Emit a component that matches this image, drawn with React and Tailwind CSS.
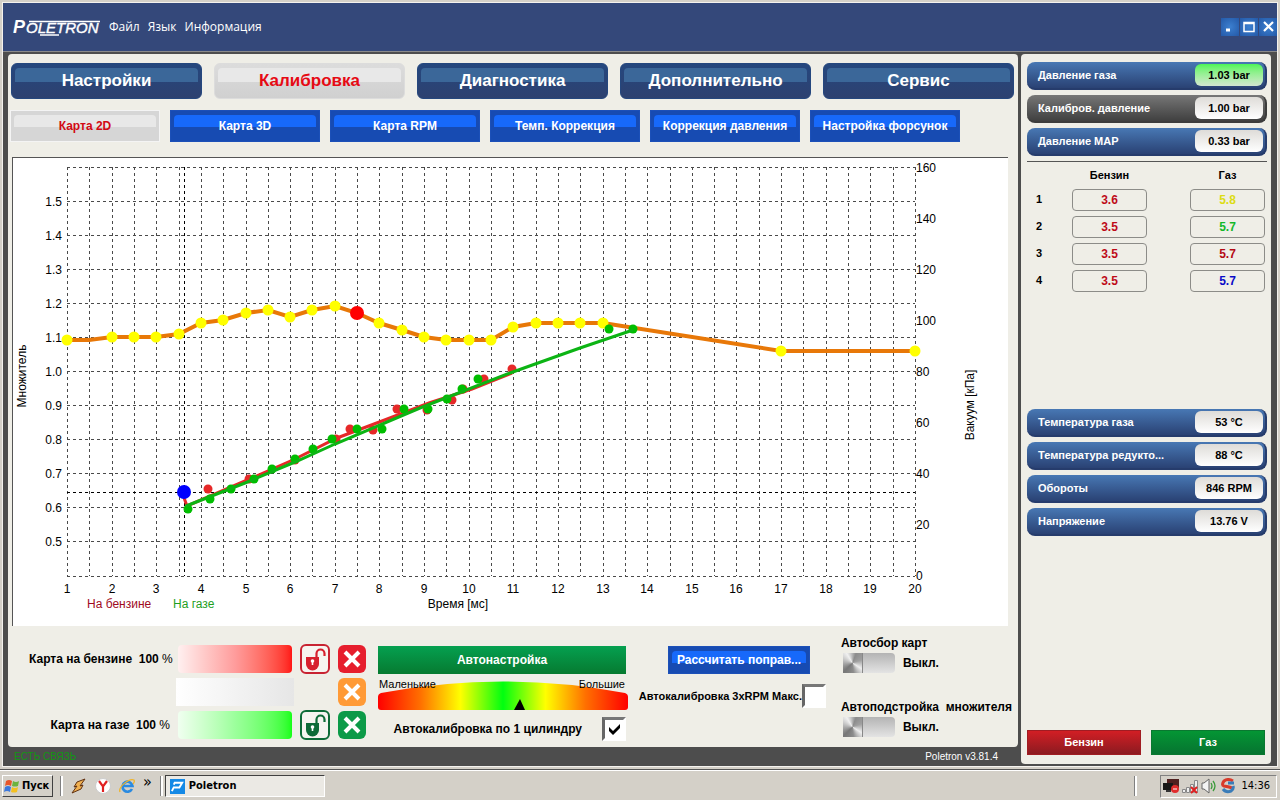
import React, { useState } from 'react';

const MAIN_TABS = ['Настройки', 'Калибровка', 'Диагностика', 'Дополнительно', 'Сервис'];
const MAP_TABS = ['Карта 2D', 'Карта 3D', 'Карта RPM', 'Темп. Коррекция', 'Коррекция давления', 'Настройка форсунок'];

const INJECTORS = [
    { petrol: '3.6', gas: '5.8', gasColor: 'text-[#dcdc14]' },
    { petrol: '3.5', gas: '5.7', gasColor: 'text-[#14b82a]' },
    { petrol: '3.5', gas: '5.7', gasColor: 'text-[#b40a14]' },
    { petrol: '3.5', gas: '5.7', gasColor: 'text-[#0a0ac8]' },
];

// [injection time ms, multiplier]
const MULTIPLIER = [
    [1, 1.09], [2, 1.1], [2.5, 1.1], [3, 1.1], [3.5, 1.11], [4, 1.14], [4.5, 1.15], [5, 1.17], [5.5, 1.18],
    [6, 1.16], [6.5, 1.18], [7, 1.19], [7.5, 1.17], [8, 1.14], [8.5, 1.12], [9, 1.1], [9.5, 1.09], [10, 1.09],
    [10.5, 1.09], [11, 1.13], [11.5, 1.14], [12, 1.14], [12.5, 1.14], [13, 1.14], [17, 1.06], [20, 1.06],
];

// collected points in plot coordinates
const PETROL_POINTS = [
    [196, 332], [237, 322], [283, 303], [324, 282], [338, 272], [361, 273], [385, 252], [415, 253], [440, 243],
    [451, 232], [472, 222], [500, 212],
];
const GAS_POINTS = [
    [176, 352], [198, 342], [219, 332], [242, 322], [260, 312], [283, 302], [301, 292], [320, 282], [345, 272],
    [370, 272], [392, 252], [416, 252], [435, 242], [450, 232], [466, 222], [597, 172], [621, 172],
];

const px = (ms) => Math.round(55 + (ms - 1) * 44.63);
const py = (m) => Math.round(180 - (m - 1.1) * 340);

const MapChart = () => {
    const cols = Array.from({ length: 39 }, (_, i) => px(1 + i / 2));
    const rows = Array.from({ length: 11 }, (_, i) => py(1.5 - i / 10));

    return (
        <svg viewBox="0 0 996 469" className="block w-full bg-white" fontFamily="'Liberation Sans', Arial, sans-serif" fontSize="12">
            <path d="M0 .5H996M.5 0V469" stroke="#555" fill="none" />
            <g stroke="#4a4a4a" strokeDasharray="3 3" shapeRendering="crispEdges">
                {cols.map((x) => <path key={x} d={`M${x}.5 10V419`} />)}
                {[10, ...rows, 419].map((y) => <path key={y} d={`M55 ${y}.5H903`} />)}
                <path d="M172.500 10V419M55 335.500H903" stroke="#000" />
            </g>

            <g textAnchor="end">
                {rows.map((y, i) => <text key={y} x="50" y={y + 5}>{(1.5 - i / 10).toFixed(1)}</text>)}
            </g>
            <g textAnchor="middle">
                {Array.from({ length: 20 }, (_, i) => (
                    <text key={i} x={px(i + 1)} y="436">{i + 1}</text>
                ))}
            </g>
            {Array.from({ length: 9 }, (_, i) => (
                <text key={i} x="904" y={15 + i * 51}>{160 - i * 20}</text>
            ))}
            <text x="75" y="451" fill="#a00a1e">На бензине</text>
            <text x="161" y="451" fill="#1ea01e">На газе</text>
            <text x="446" y="451" textAnchor="middle">Время [мс]</text>
            <text transform="translate(14 219) rotate(-90)" textAnchor="middle">Множитель</text>
            <text transform="translate(962 248) rotate(-90)" textAnchor="middle">Вакуум [кПа]</text>

            <polyline
                points={MULTIPLIER.map(([x, y]) => `${px(x)},${py(y)}`).join(' ').replace(' ', ` ${px(1.5)},183 `)}
                fill="none" stroke="#e87808" strokeWidth="4"
            />
            {MULTIPLIER.map(([x, y]) => (
                <circle key={x} cx={px(x)} cy={py(y)} r={x === 7.5 ? 7 : 5.5} fill={x === 7.5 ? '#ff0000' : '#ffff00'} />
            ))}

            {PETROL_POINTS.map(([x, y]) => <circle key={x} cx={x} cy={y} r="4.500" fill="#e62828" />)}
            <polyline points="171,338 175,349 233,324 283,302 325,281 370,264 417,246 460,232 500,216" fill="none" stroke="#e62828" strokeWidth="3" />
            {GAS_POINTS.map(([x, y]) => <circle key={x} cx={x} cy={y} r="4.500" fill="#00be00" />)}
            <polyline points="174,349 233,326 283,305 323,287 408,251 498,216 568,191 621,173" fill="none" stroke="#0cb414" strokeWidth="3" />
            <circle cx="172" cy="335" r="7" fill="#0000ff" />
        </svg>
    );
};

const Logo = () => (
    <svg viewBox="0 0 88 20" className="h-5 w-[88px]" fill="#fff" fontFamily="'Liberation Sans', Arial, sans-serif" fontStyle="italic">
        <text x="0" y="16" fontSize="18" fontWeight="bold">P</text>
        <text x="13" y="16" fontSize="15" stroke="#fff" strokeWidth=".4">OLETRON</text>
        <path d="M16 4.500H87M27 18H46" stroke="#fff" strokeWidth="1.500" />
    </svg>
);

const TitleBar = () => (
    <header className="flex h-12 items-center bg-[#34487a] pl-[10px] text-white">
        <Logo />
        <nav className="ml-2 flex gap-2 font-['Open_Sans',sans-serif] text-xs">
            {['Файл', 'Язык', 'Информация'].map((item) => <a key={item} href="#">{item}</a>)}
        </nav>
        <div className="ml-auto flex gap-px">
            {['M5 12H9', 'M4 4.500H14V13.500H4ZM4 5.500H14', 'M5 4L14 13M14 4L5 13'].map((d, i) => (
                <button
                    key={d} aria-label={['Свернуть', 'Развернуть', 'Закрыть'][i]}
                    className="size-[18px] bg-radial from-[#3c80d0] to-[#2459a8]"
                >
                    <svg viewBox="0 0 18 18" fill="none" stroke="#fff" strokeWidth={[3, 1.5, 2.2][i]}><path d={d} /></svg>
                </button>
            ))}
        </div>
    </header>
);

const MainTab = ({ label, active, onClick }) => (
    <button
        onClick={onClick}
        className={`relative h-9 rounded-md border text-[17px] font-bold ${active
            ? 'border-[#dcdcdc] bg-linear-to-b from-[#dcdcdc] to-[#d0d0d0] text-[#e60a14]'
            : 'border-[#25477e] bg-linear-to-b from-[#25477e] to-[#2d4170] text-white'}`}
    >
        <span className={`absolute inset-x-[3px] top-1 h-[14px] rounded-t-sm ${active ? 'bg-[#e8e8e8]' : 'bg-[#3b6799]'}`} />
        <span className="relative">{label}</span>
    </button>
);

const BlueButton = ({ label, active, onClick, className }) => (
    <button
        onClick={onClick}
        className={`relative border text-xs font-bold ${className} ${active
            ? 'border-[#f4f4f4] bg-[#d6d6d6] text-[#d20a14]'
            : 'border-[#1c50b8] bg-[#174bb2] text-white'}`}
    >
        <span className={`absolute inset-x-[3px] top-1 h-3 rounded-t-sm ${active ? 'bg-[#e8e8e8]' : 'bg-[#1769fa]'}`} />
        <span className="relative">{label}</span>
    </button>
);

const Lock = ({ className, label }) => (
    <button aria-label={label} className={`flex size-[30px] items-center justify-center rounded-md border-2 bg-[#f6f4f0] ${className}`}>
        <svg viewBox="0 0 26 26" className="size-[26px]">
            <path d="M4 11H17V18A6.500 6.500 0 0 1 4 18Z" fill="currentColor" />
            <path d="M14.500 11V7.500A4 4 0 0 1 22.500 7.500V10" fill="none" stroke="currentColor" strokeWidth="2.200" />
            <circle cx="10.500" cy="15" r="1.800" fill="#fff" />
            <path d="M9.700 15H11.300V19H9.700Z" fill="#fff" />
        </svg>
    </button>
);

const ClearButton = ({ className }) => (
    <button aria-label="Очистить" className={`size-7 rounded-md ${className}`}>
        <svg viewBox="0 0 28 28"><path d="M7 7L21 21M21 7L7 21" stroke="#fff" strokeWidth="4" /></svg>
    </button>
);

const CheckBox = ({ id, defaultChecked }) => (
    <span className="relative size-6 shrink-0">
        <input
            id={id} type="checkbox" defaultChecked={defaultChecked}
            className="peer block size-6 appearance-none border-[3px] border-t-[#777] border-r-white border-b-white border-l-[#666] bg-white"
        />
        <svg viewBox="0 0 24 24" className="pointer-events-none absolute inset-0 hidden peer-checked:block">
            <path d="M7 10L11 14L18 7V11L11 18L7 14Z" fill="#000" />
        </svg>
    </span>
);

const Toggle = ({ id, label }) => {
    const [on, setOn] = useState(false);
    return (
        <div>
            <label htmlFor={id} className="block whitespace-pre leading-4">{label}</label>
            <div className="mt-[2px] ml-[2px] flex items-center gap-2 leading-5">
                <input
                    id={id} type="checkbox" role="switch" checked={on} onChange={() => setOn(!on)}
                    className="h-5 w-[52px] appearance-none rounded-sm bg-linear-to-b from-[#b4b4b4] to-[#e4e4e4] before:block before:size-5 before:border-r before:border-[#888] before:bg-[conic-gradient(from_20deg,#8c8c8c,#a0a0a0,#eee,#8c8c8c,#777,#b4b4b4,#f0f0f0,#8c8c8c)] checked:before:ml-8"
                />
                <span>{on ? 'Вкл.' : 'Выкл.'}</span>
            </div>
        </div>
    );
};

const TuneGauge = () => (
    <svg viewBox="0 0 250 32" className="block h-8 w-full" fontFamily="'Liberation Sans', Arial, sans-serif" fontSize="11" fontWeight="normal">
        <defs>
            <linearGradient id="tune">
                <stop offset="0" stopColor="#ff0000" />
                <stop offset=".17" stopColor="#ff7000" />
                <stop offset=".33" stopColor="#ffff00" />
                <stop offset=".5" stopColor="#00ff10" />
                <stop offset=".67" stopColor="#ffff00" />
                <stop offset=".83" stopColor="#ff7000" />
                <stop offset="1" stopColor="#ff0000" />
            </linearGradient>
        </defs>
        <path d="M3 14Q125 -9 247 14Q250 15 250 18V28Q250 31 247 31H3Q0 31 0 28V18Q0 15 3 14Z" fill="url(#tune)" />
        <path d="M142 20L147 31H136Z" />
        <text x="1" y="9">Маленькие</text>
        <text x="247" y="9" textAnchor="end">Большие</text>
    </svg>
);

const Controls = () => (
    <div className="flex flex-1 items-start pt-[19px] pr-[6px] pl-[21px] text-xs font-bold">
        <div className="grid grid-cols-[141px_118px_32px_28px] items-center gap-x-[6px] gap-y-[5px]">
            <div className="whitespace-pre text-right">Карта на бензине  100 <span className="font-normal">%</span></div>
            <div className="mx-[2px] h-7 rounded-sm bg-linear-to-r from-[#fff0f0] via-[#ff9c9c] to-[#ff1414]" />
            <Lock label="Блокировка карты на бензине" className="-my-px border-[#c82332] text-[#d7202e]" />
            <ClearButton className="bg-[#e61e2d]" />
            <div />
            <div className="h-7 bg-linear-to-r from-white to-[#e6e6e6]" />
            <div />
            <ClearButton className="bg-[#ff9a36]" />
            <div className="whitespace-pre text-right">Карта на газе  100 <span className="font-normal">%</span></div>
            <div className="mx-[2px] h-7 rounded-sm bg-linear-to-r from-[#f0fff0] via-[#9cff9c] to-[#14ff14]" />
            <Lock label="Блокировка карты на газе" className="-my-px border-[#0e6b38] text-[#0e6b38]" />
            <ClearButton className="bg-[#0c9a48]" />
        </div>

        <div className="mt-px ml-[12px] w-[250px]">
            <button className="block h-7 w-[248px] bg-linear-to-b from-[#05a050] to-[#067a30] text-white">Автонастройка</button>
            <div className="mt-[5px]"><TuneGauge /></div>
            <div className="mt-[6px] mr-[2px] flex items-center justify-end gap-5">
                <label htmlFor="auto-one">Автокалибровка по 1 цилиндру</label>
                <CheckBox id="auto-one" defaultChecked />
            </div>
        </div>

        <div className="mt-px ml-[3px] w-[195px]">
            <BlueButton label="Рассчитать поправ..." className="ml-[37px] block h-7 w-[142px]" />
            <div className="mt-[10px] flex items-center justify-end">
                <label htmlFor="auto-rpm" className="whitespace-nowrap text-[11px]">Автокалибровка 3xRPM Макс.</label>
                <CheckBox id="auto-rpm" />
            </div>
        </div>

        <div className="-mt-[10px] ml-auto flex flex-col gap-[26px]">
            <Toggle id="auto-collect" label="Автосбор карт" />
            <Toggle id="auto-adjust" label="Автоподстройка  множителя" />
        </div>
    </div>
);

const Reading = ({ label, value, gray, ok }) => (
    <div className={`flex h-7 items-center rounded-lg border-r-2 border-b-2 pr-[2px] pl-[11px] text-[11px] font-bold text-white ${gray
        ? 'border-[#3c3c3c] bg-linear-to-b from-[#777] to-[#404040]'
        : 'border-[#263c6c] bg-linear-to-b from-[#4878b4] to-[#2a4274]'}`}
    >
        <span>{label}</span>
        <output className={`ml-auto flex h-[22px] w-[68px] items-center justify-center rounded-md text-black ${ok
            ? 'bg-linear-to-b from-[#4bf556] to-[#d2e6cf]'
            : 'bg-linear-to-b from-[#dedcd8] to-white'}`}
        >
            {value}
        </output>
    </div>
);

const Sidebar = () => (
    <aside className="mb-[2px] flex w-[250px] shrink-0 flex-col rounded-sm bg-[#efeee7] pt-2 pr-1 pb-[9px] pl-[6px]">
        <div className="flex flex-col gap-[5px]">
            <Reading label="Давление газа" value="1.03 bar" ok />
            <Reading label="Калибров. давление" value="1.00 bar" gray />
            <Reading label="Давление MAP" value="0.33 bar" />
        </div>
        <hr className="mt-[5px] border-[#555]" />
        <table className="mt-[2px] w-full table-fixed text-center text-xs font-bold">
            <thead className="text-[11px]">
                <tr className="h-[22px]">
                    <th className="w-[45px]" />
                    <th className="w-[75px]">Бензин</th>
                    <th />
                    <th className="w-[75px]">Газ</th>
                    <th className="w-[2px]" />
                </tr>
            </thead>
            <tbody>
                {INJECTORS.map((row, i) => (
                    <tr key={i} className="h-[27px]">
                        <th className="pl-[9px] text-left text-[11px]">{i + 1}</th>
                        <td className="text-[#be0a19]"><div className="h-[22px] rounded-sm border border-[#8c8c88] leading-5">{row.petrol}</div></td>
                        <td />
                        <td className={row.gasColor}><div className="h-[22px] rounded-sm border border-[#8c8c88] leading-5">{row.gas}</div></td>
                        <td />
                    </tr>
                ))}
            </tbody>
        </table>
        <div className="mt-[115px] flex flex-col gap-[5px]">
            <Reading label="Температура газа" value="53 °C" />
            <Reading label="Температура редукто..." value="88 °C" />
            <Reading label="Обороты" value="846 RPM" />
            <Reading label="Напряжение" value="13.76 V" />
        </div>
        <div className="mt-auto mr-[2px] grid grid-cols-2 gap-[10px] text-[11px] font-bold text-white">
            <button className="h-[25px] border border-[#a01c22] bg-linear-to-b from-[#d21e24] to-[#8c1a20]">Бензин</button>
            <button className="h-[25px] border border-[#0a7830] bg-linear-to-b from-[#049634] to-[#067430]">Газ</button>
        </div>
    </aside>
);

const Groove = () => <div className="h-5 w-[3px] border-l border-[#808080] border-r-white bg-white" />;

const Taskbar = () => (
    <footer className="flex h-[30px] shrink-0 items-center border-t border-white bg-[#d4d0c8] pt-px pr-[3px] pl-[2px] font-['DejaVu_Sans_Condensed','DejaVu_Sans',sans-serif] text-[11px]">
        <button className="flex h-[22px] w-[51px] items-center gap-[2px] border border-t-white border-r-[#404040] border-b-[#404040] border-l-white pl-px font-bold">
            <svg viewBox="0 0 16 16" className="size-4 shrink-0">
                <path d="M2 3Q5 1 8 3L7 8Q4 6 1 8Z" fill="#e8562a" />
                <path d="M9 3Q12 5 15 3L14 8Q11 9 8 8Z" fill="#6db33f" />
                <path d="M1 9Q4 7 7 9L6 14Q3 12 0 14Z" fill="#3c78dc" />
                <path d="M8 9Q11 11 14 9L13 14Q10 15 7 14Z" fill="#f4c020" />
            </svg>
            Пуск
        </button>
        <div className="ml-[7px] flex items-center gap-2">
            <Groove />
            <button aria-label="Winamp">
                <svg viewBox="0 0 16 16" className="size-4"><path d="M14 1L6 4L3 9L6 8L1 15L10 11L12 7L9 8Z" fill="#f0b050" stroke="#603010" /></svg>
            </button>
            <button aria-label="Яндекс">
                <svg viewBox="0 0 16 16" className="size-4"><circle cx="8" cy="8" r="7.500" fill="#fff" stroke="#ccc" /><path d="M4 3L8 8.500L12 3M8 8V14" fill="none" stroke="#e02020" strokeWidth="2.200" /></svg>
            </button>
            <button aria-label="Internet Explorer">
                <svg viewBox="0 0 16 16" className="size-4">
                    <path d="M13 11A5 5 0 1 1 13.500 8H4" fill="none" stroke="#2a8ae0" strokeWidth="2.600" />
                    <path d="M1 14C-1 9 10 0 15 2C15.500 3 15 5 14 6" fill="none" stroke="#f0b428" strokeWidth="1.300" />
                </svg>
            </button>
            <span className="-mt-2 text-base leading-4">»</span>
            <Groove />
        </div>
        <button className="ml-[2px] flex h-[22px] w-[160px] items-center gap-1 border border-t-[#404040] border-r-white border-b-white border-l-[#404040] bg-[#ebe9e4] pl-1 font-bold">
            <svg viewBox="0 0 16 16" className="size-[15px]">
                <path d="M0 0H16V16H0Z" fill="#1489e6" />
                <path d="M2 13L4 9H10L13 4H5L4 6" fill="none" stroke="#fff" strokeWidth="2" />
            </svg>
            Poletron
        </button>
        <div className="mr-[23px] ml-auto"><Groove /></div>
        <div className="flex h-[23px] items-center gap-[3px] border border-t-[#808080] border-r-white border-b-white border-l-[#808080] pr-[6px] pl-[2px]">
            <svg viewBox="0 0 16 16" className="size-4">
                <path d="M4 1H16V10H4Z" fill="#502020" /><path d="M0 5H10V12H0Z" fill="#181818" /><path d="M3 12H8V14H3Z" fill="#333" />
                <circle cx="12" cy="11" r="4" fill="#e02c2c" /><path d="M10 11H14" stroke="#fff" />
            </svg>
            <svg viewBox="0 0 16 16" className="size-4">
                <path d="M.5 11.500H3.500V14.500H.5ZM4.500 9.500H7.500V14.500H4.500ZM8.500 6.500H11.500V14.500H8.500ZM12.500 2.500H15.500V14.500H12.500Z" fill="#eee" stroke="#888" />
                <path d="M9 9L15 15M15 9L9 15" stroke="#e02020" strokeWidth="2" />
            </svg>
            <svg viewBox="0 0 16 16" className="size-4">
                <path d="M1 5H3L8 1V15L3 11H1Z" fill="#f4f4f4" stroke="#666" />
                <path d="M10 5Q12 8 10 11M12 3Q16 8 12 13" fill="none" stroke="#3a9a3a" strokeWidth="1.300" />
            </svg>
            <svg viewBox="0 0 16 16" className="size-4">
                <path d="M13 3Q8 0 4 3Q1 7 4 8Q10 9 12 10" fill="none" stroke="#d83a2a" strokeWidth="3" />
                <path d="M3 11Q6 15 11 13Q14 11 13 8M8 5H14" fill="none" stroke="#3a7cb8" strokeWidth="3" />
            </svg>
            <time className="pl-[2px]">14:36</time>
        </div>
    </footer>
);

const App = () => {
    const [mainTab, setMainTab] = useState('Калибровка');
    const [mapTab, setMapTab] = useState('Карта 2D');

    return (
        <div className="flex min-h-screen flex-col bg-[#d4d0c8] font-['Liberation_Sans',Arial,sans-serif] text-black">
            <div className="flex flex-1 flex-col border-b border-[#555] px-[2px] pt-[2px] pb-[2px]">
                <div className="flex flex-1 flex-col border border-[#f4f2ee]">
                    <TitleBar />
                    <div className="flex flex-1 gap-[3px] border-t border-[#8a8a8a] bg-[#4d4d4d] pt-[2px] pr-[6px] pl-[5px]">
                        <main className="flex min-w-0 flex-1 flex-col">
                            <section className="flex flex-1 flex-col rounded-sm bg-[#efeee7] pt-[9px]">
                                <div className="grid grid-cols-5 gap-3 pr-1 pl-[3px]">
                                    {MAIN_TABS.map((tab) => (
                                        <MainTab key={tab} label={tab} active={tab === mainTab} onClick={() => setMainTab(tab)} />
                                    ))}
                                </div>
                                <div className="mt-[11px] flex gap-[10px] pl-[2px]">
                                    {MAP_TABS.map((tab) => (
                                        <BlueButton key={tab} label={tab} active={tab === mapTab} onClick={() => setMapTab(tab)} className="h-8 w-[150px]" />
                                    ))}
                                </div>
                                <div className="mt-[15px] mr-[10px] ml-1"><MapChart /></div>
                                <Controls />
                            </section>
                            <div className="flex h-[19px] items-center justify-between pr-5 pl-[6px] text-[10px]">
                                <span className="text-[#129612]">ЕСТЬ СВЯЗЬ</span>
                                <span className="text-white">Poletron v3.81.4</span>
                            </div>
                        </main>
                        <Sidebar />
                    </div>
                </div>
            </div>
            <Taskbar />
        </div>
    );
};

export default App;
